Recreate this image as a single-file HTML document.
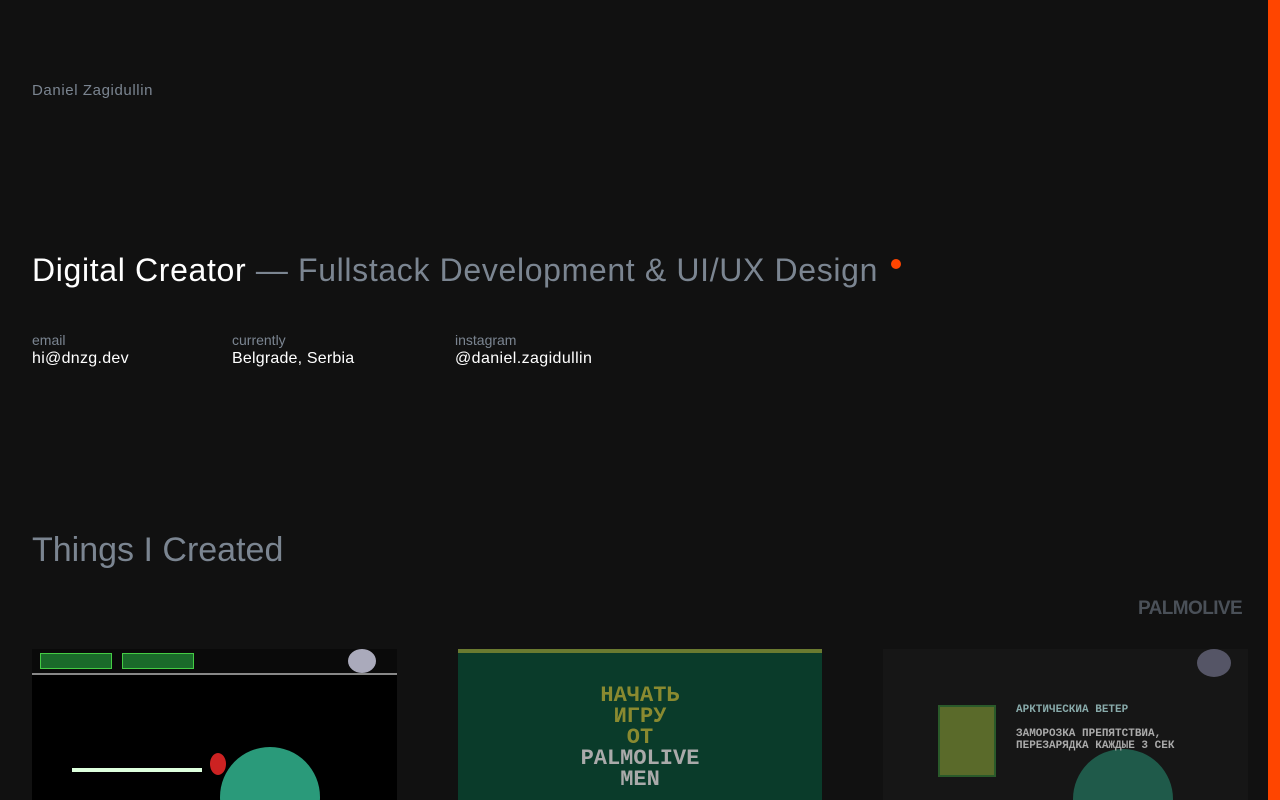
<!DOCTYPE html>
<html style="overflow:hidden"><head><style>
html,body{margin:0;background:#111;width:1280px;height:800px;overflow:hidden}
body{position:relative;font-family:"Liberation Sans",sans-serif}
.bar{position:absolute;left:1268px;top:0;width:12px;height:800px;background:#ff4500}
.a{position:absolute;white-space:nowrap}
.g{color:#7b8591}
</style></head><body>
<div class="bar"></div>
<div class="a g" style="left:32px;top:82px;font-size:15px;letter-spacing:0.6px">Daniel Zagidullin</div>
<div class="a" style="left:32px;top:252px;font-size:32px;color:#fff;letter-spacing:0.65px">Digital Creator <span class="g">— Fullstack Development &amp; UI/UX Design</span></div>
<div class="a" style="left:891px;top:259px;width:10px;height:10px;border-radius:50%;background:#ff4500"></div>
<div class="a g" style="left:32px;top:332px;font-size:14px">email</div>
<div class="a" style="left:32px;top:350px;font-size:16px;color:#fff;letter-spacing:0.3px">hi@dnzg.dev</div>
<div class="a g" style="left:232px;top:332px;font-size:14px">currently</div>
<div class="a" style="left:232px;top:350px;font-size:16px;color:#fff;letter-spacing:0.2px">Belgrade, Serbia</div>
<div class="a g" style="left:455px;top:332px;font-size:14px">instagram</div>
<div class="a" style="left:455px;top:350px;font-size:16px;color:#fff;letter-spacing:0.4px">@daniel.zagidullin</div>
<div class="a g" style="left:32px;top:531px;font-size:34px">Things I Created</div>
<div class="a" style="left:1138px;top:598px;font-size:19px;font-weight:bold;color:#4a5058;letter-spacing:-0.6px">PALMOLIVE</div>

<div class="a" style="left:32px;top:649px;width:365px;height:151px;background:#000;overflow:hidden">
 <div style="position:absolute;left:0;top:0;width:365px;height:24px;background:#0a0a0a;border-bottom:2px solid #888"></div>
 <div style="position:absolute;left:8px;top:4px;width:70px;height:14px;background:#1a6a2a;border:1px solid #4c4"></div>
 <div style="position:absolute;left:90px;top:4px;width:70px;height:14px;background:#1a6a2a;border:1px solid #4c4"></div>
 <div style="position:absolute;left:316px;top:0;width:28px;height:24px;border-radius:50%;background:#aab"></div>
 <div style="position:absolute;left:40px;top:119px;width:130px;height:4px;background:#dfd"></div>
 <div style="position:absolute;left:188px;top:98px;width:100px;height:100px;border-radius:50%;background:#2a9a7a"></div>
 <div style="position:absolute;left:178px;top:104px;width:16px;height:22px;border-radius:50%;background:#c22"></div>
</div>
<div class="a" style="left:458px;top:649px;width:364px;height:151px;background:#0a3b2a;border-top:4px solid #6a7a30;box-sizing:border-box;font-family:'Liberation Mono',monospace;font-weight:bold;text-align:center;line-height:21px;font-size:22px;overflow:hidden">
 <div style="margin-top:32px;color:#8a8a30">НАЧАТЬ<br>ИГРУ<br>ОТ</div>
 <div style="color:#aaa">PALMOLIVE<br>MEN</div>
</div>
<div class="a" style="left:883px;top:649px;width:365px;height:151px;background:#161616;overflow:hidden">
 <div style="position:absolute;left:314px;top:0;width:34px;height:28px;border-radius:50%;background:#556"></div>
 <div style="position:absolute;left:55px;top:56px;width:54px;height:68px;background:#5a6a2a;border:2px solid #2a5a2a"></div>
 <div style="position:absolute;left:190px;top:100px;width:100px;height:100px;border-radius:50%;background:#1f5a4a"></div>
 <div style="position:absolute;left:133px;top:55px;font:bold 11px 'Liberation Mono',monospace;color:#8aa">АРКТИЧЕСКИА ВЕТЕР</div>
 <div style="position:absolute;left:133px;top:79px;font:bold 11px/12px 'Liberation Mono',monospace;color:#aaa">ЗАМОРОЗКА ПРЕПЯТСТВИА,<br>ПЕРЕЗАРЯДКА КАЖДЫЕ 3 СЕК</div>
</div>
</body></html>
